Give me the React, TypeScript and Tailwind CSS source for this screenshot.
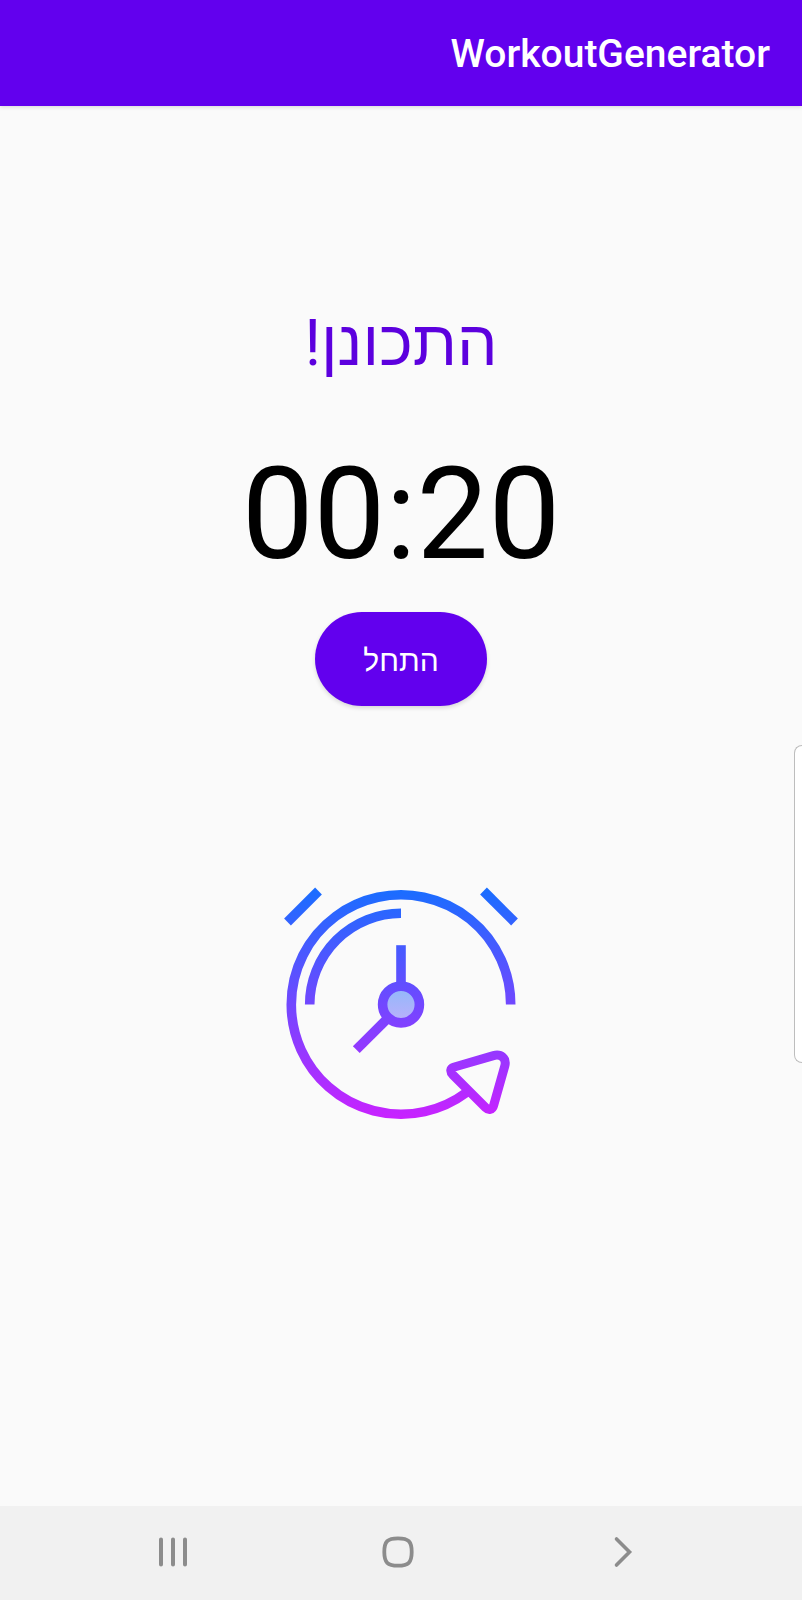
import { useState } from "react";

function AlarmIllustration() {
  return (
    <svg viewBox="11 14 240 240" className="mt-[178px] size-60" fill="none" role="img" aria-label="שעון">
      <defs>
        <linearGradient id="stroke" gradientUnits="userSpaceOnUse" x1="0" y1="20" x2="0" y2="248">
          <stop offset="0" stopColor="#1a6dff" />
          <stop offset="1" stopColor="#c822ff" />
        </linearGradient>
        <linearGradient id="hub" gradientUnits="userSpaceOnUse" x1="0" y1="120" x2="0" y2="149">
          <stop offset="0" stopColor="#94b8fa" />
          <stop offset="1" stopColor="#b8b0fb" />
        </linearGradient>
      </defs>
      <circle cx="131" cy="134.5" r="15" fill="url(#hub)" />
      <g stroke="url(#stroke)" strokeWidth="9.6">
        <path d="M240.7 134.5A109.7 109.7 0 1 0 196.5 222.5" />
        <path d="M39.7 134.5A91.3 91.3 0 0 1 131 43.3" />
        <circle cx="131" cy="134.5" r="18.4" />
        <path d="M131 75.200V116" />
        <path d="M118 148L86.300 179.700" />
        <path d="M48.500 21L17.500 52" />
        <path d="M213.500 21L244.500 52" />
        <path
          d="M183.500 197.300L223.500 185.600C231 183.500 236.800 188.500 234.800 196L223.600 235.500C222.400 240 218.500 240.500 215.500 237.500L183 205C179.500 201.500 180.500 198.200 183.500 197.300Z"
          strokeLinejoin="round"
          strokeWidth="9"
        />
      </g>
    </svg>
  );
}

function NavigationBar() {
  return (
    <nav className="flex h-[94px] items-stretch bg-[#f1f1f1] pr-[67px] pb-0.5 pl-[61px] text-[#8c8c8c]">
      <button type="button" aria-label="Recents" className="flex flex-1 items-center justify-center">
        <svg viewBox="0 0 32 32" className="size-8" stroke="currentColor" strokeWidth="4" strokeLinecap="round">
          <path d="M4 3.500V28.500M16 3.500V28.500M28 3.500V28.500" />
        </svg>
      </button>
      <button type="button" aria-label="Home" className="flex flex-1 items-center justify-center">
        <svg viewBox="0 0 32 32" className="size-8" fill="none" stroke="currentColor" strokeWidth="3.800">
          <path d="M16 2.300C26.500 2.300 29.700 5.500 29.700 16S26.500 29.700 16 29.700 2.300 26.500 2.300 16 5.500 2.300 16 2.300Z" />
        </svg>
      </button>
      <button type="button" aria-label="Back" className="flex flex-1 items-center justify-center">
        <svg viewBox="0 0 32 32" className="size-8" fill="none" stroke="currentColor" strokeWidth="3.600" strokeLinecap="round">
          <path d="M9.500 3L22.500 16L9.500 29" />
        </svg>
      </button>
    </nav>
  );
}

export default function App() {
  const [seconds] = useState(20);
  const time = `${String(Math.floor(seconds / 60)).padStart(2, "0")}:${String(seconds % 60).padStart(2, "0")}`;

  return (
    <div className="relative flex min-h-screen flex-col overflow-hidden bg-[#fafafa] font-['Roboto','Liberation_Sans',sans-serif]">
      <header className="z-10 flex h-[106px] items-center justify-end bg-[#6200ee] px-8 pt-0.5 shadow-[0_1px_4px_rgba(0,0,0,0.14)]">
        <h1 className="text-[39px] leading-[48px] font-medium text-white">WorkoutGenerator</h1>
      </header>
      <main className="flex flex-1 flex-col items-center pt-[194px]">
        <h2 dir="rtl" lang="he" className="text-[64px] leading-[88px] text-[#5c00de]">
          התכונן!
        </h2>
        <p className="mt-[50px] text-[128px] leading-[152px] text-black">{time}</p>
        <button
          type="button"
          lang="he"
          className="mt-[22px] h-[94px] w-[172px] rounded-full bg-[#6200ee] pt-1 text-[30px] leading-8 text-white shadow-[0_2px_4px_rgba(0,0,0,0.14)]"
        >
          התחל
        </button>
        <AlarmIllustration />
      </main>
      <aside
        aria-label="Edge panel"
        className="absolute top-[745px] right-0 h-[318px] w-2 rounded-l-[10px] border border-r-0 border-[#bdbdbd] bg-white"
      />
      <NavigationBar />
    </div>
  );
}
